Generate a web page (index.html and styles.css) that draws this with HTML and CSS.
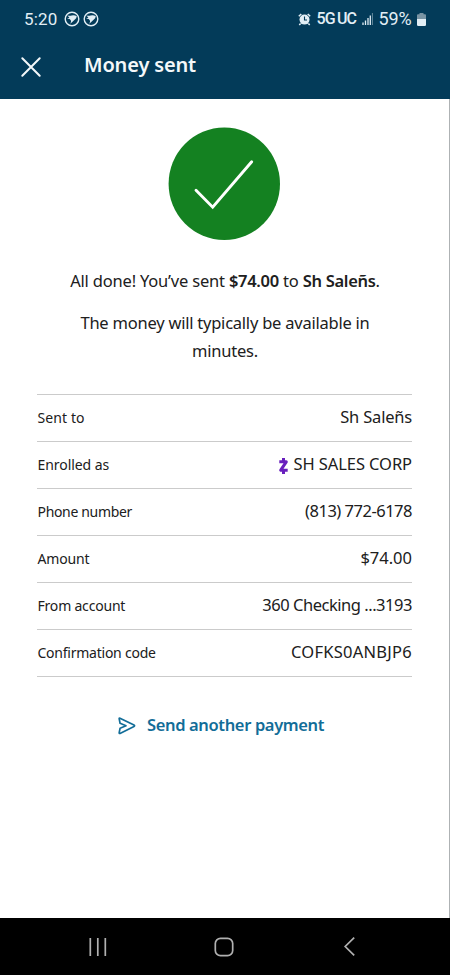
FILE: index.html
```
<!DOCTYPE html>
<html lang="en">
<head>
<meta charset="utf-8">
<title>Money sent</title>
<link rel="stylesheet" href="styles.css">
</head>
<body>
<header class="top">
  <div class="status">
    <span class="time">5:20</span>
    <svg class="globe" viewBox="0 0 16 16"><circle cx="8" cy="8" r="6.8" fill="none" stroke="currentColor" stroke-width="1.4"/><path d="M3.4 4.4Q6 5.1 7.6 4.4Q10.5 3.6 12.8 5.2Q12.6 7.4 10.6 8.8Q8.6 10.8 6.2 12.8Q7.6 10.4 6.8 9.2Q6.4 7.9 3 7.6Q5 6.9 5.4 6.3Q4 5.6 3.4 4.4Z" fill="currentColor"/></svg>
    <svg class="globe second" viewBox="0 0 16 16"><circle cx="8" cy="8" r="6.8" fill="none" stroke="currentColor" stroke-width="1.4"/><path d="M3.4 4.4Q6 5.1 7.6 4.4Q10.5 3.6 12.8 5.2Q12.6 7.4 10.6 8.8Q8.6 10.8 6.2 12.8Q7.6 10.4 6.8 9.2Q6.4 7.9 3 7.6Q5 6.9 5.4 6.3Q4 5.6 3.4 4.4Z" fill="currentColor"/></svg>
    <svg class="alarm" viewBox="0 0 13 13"><circle cx="6.5" cy="6.6" r="5" fill="currentColor"/><path d="M.8 3.3L3.3 1M9.7 1L12.2 3.3M2.6 10.5L1.3 12M10.4 10.5L11.7 12" stroke="currentColor" stroke-width="1.5"/><path d="M6.5 3.5V7H9" fill="none" stroke="#033b59" stroke-width="1.1"/></svg>
    <span class="network">5G<span class="uc">UC</span></span>
    <svg class="signal" viewBox="0 0 11 12"><path d="M1 9.5V12M3.5 7.5V12M6 5V12M8.3 2.5V12" stroke="currentColor" stroke-width="1.3"/><path d="M10.4 0V12" stroke="currentColor" stroke-width="1" opacity=".45"/></svg>
    <span class="percent">59%</span>
    <svg class="battery" viewBox="0 0 9 13"><path d="M2.5 0H6.5V1.3H8Q9 1.3 9 2.3V6H0V2.3Q0 1.3 1 1.3H2.5Z" fill="#7994a4"/><path d="M0 6H9V11.8Q9 13 7.8 13H1.2Q0 13 0 11.8Z" fill="currentColor"/></svg>
  </div>
  <div class="titlebar">
    <svg class="close" viewBox="0 0 20 20"><path d="M1.3 1.3L18.7 18.7M18.7 1.3L1.3 18.7" stroke="currentColor" stroke-width="2" stroke-linecap="round"/></svg>
    <h1>Money sent</h1>
  </div>
</header>
<main>
  <svg class="success" viewBox="0 0 112 113"><ellipse cx="56.3" cy="56.8" rx="55.7" ry="56.3" fill="#148121"/><path d="M28 63.3L44.7 80.2L83.7 34.8" fill="none" stroke="#fff" stroke-width="2.9" stroke-linecap="round" stroke-linejoin="miter"/></svg>
  <p class="done">All done! You’ve sent <b>$74.00</b> to <b>Sh Saleñs</b>.</p>
  <p class="note">The money will typically be available in<br>minutes.</p>
  <dl>
    <div class="row"><dt class="t1">Sent to</dt><dd class="d1">Sh Saleñs</dd></div>
    <div class="row"><dt class="t2">Enrolled as</dt><dd class="d2"><svg class="zelle" viewBox="0 0 11 18"><path d="M1.3 4.8H8.3L2.7 13.2H9.7M5.5 1V4M5.5 14V17" fill="none" stroke="#681fbd" stroke-width="3" stroke-linejoin="round"/></svg><span>SH SALES CORP</span></dd></div>
    <div class="row"><dt class="t3">Phone number</dt><dd class="d3">(813) 772-6178</dd></div>
    <div class="row"><dt class="t4">Amount</dt><dd class="d4">$74.00</dd></div>
    <div class="row"><dt class="t5">From account</dt><dd class="d5">360 Checking ...3193</dd></div>
    <div class="row"><dt class="t6">Confirmation code</dt><dd class="d6">COFKS0ANBJP6</dd></div>
  </dl>
  <div class="again">
    <svg class="send" viewBox="0 0 18 18"><path d="M1.2 1.8Q1 .8 2 1.2L16 8.1Q17.2 8.8 16 9.4L2 16.4Q1 16.7 1.2 15.7L2.1 11.2L8 8.8L2.1 6.3Z" fill="none" stroke="currentColor" stroke-width="1.7" stroke-linejoin="round"/></svg>
    <span>Send another payment</span>
  </div>
</main>
<nav>
  <svg class="recents" viewBox="0 0 18 18"><path d="M1.3 0V18M8.8 0V18M16.3 0V18" stroke="currentColor" stroke-width="1.7"/></svg>
  <svg class="home" viewBox="0 0 20 20"><rect x="1.3" y="1.3" width="17.4" height="17.4" rx="5.2" fill="none" stroke="currentColor" stroke-width="1.7"/></svg>
  <svg class="back" viewBox="0 0 11 19"><path d="M10.2 .6L1.2 9.5L10.2 18.4" fill="none" stroke="currentColor" stroke-width="1.7"/></svg>
</nav>
</body>
</html>
```
FILE: styles.css
```
* { box-sizing: border-box; }
body {
  margin: 0; width: 450px; height: 975px; overflow: hidden;
  display: flex; flex-direction: column; background: #fff;
  font-family: "Noto Sans", sans-serif; color: #202020;
}
svg { display: block; flex: none; overflow: visible; }
h1, p, dl, dd, dt { margin: 0; }
.top { height: 99px; background: #033b59; color: #f4f8fa; flex: none; }
.status {
  height: 37px; padding: 1px 24.5px 0 24px; display: flex; align-items: center;
  font: 16.5px/20px Roboto, sans-serif; color: #e2eef5; white-space: nowrap;
}
.time { width: 39.5px; font-size: 17px; letter-spacing: .2px; }
.globe { width: 16px; height: 16px; }
.second { margin-left: 3.5px; }
.alarm { width: 13px; height: 13px; margin-left: auto; }
.network { margin-left: 6px; width: 40px; font-size: 16px; font-weight: 500; letter-spacing: -.8px; }
.uc { margin-left: 2px; }
.signal { width: 11px; height: 12px; margin-left: 5px; }
.percent { margin-left: 6px; width: 36px; font-size: 18px; letter-spacing: -.1px; }
.battery { width: 9px; height: 13px; margin-left: 2px; }
.titlebar { display: flex; align-items: center; height: 56px; padding-left: 21px; }
.close { width: 20px; height: 20px; margin-top: 3px; }
h1 { margin-left: 43px; font-size: 20px; line-height: 28px; font-weight: 600; letter-spacing: -.15px; white-space: nowrap; }
main {
  flex: 1; padding: 28px 37px 0; border-right: 1px solid #aeb2b4;
  display: flex; flex-direction: column;
}
.success { width: 112px; height: 113px; margin-left: 131px; }
p { text-align: center; font-size: 16.5px; line-height: 28px; white-space: nowrap; letter-spacing: -.23px; padding-left: 1px; }
.done { margin-top: 27px; letter-spacing: -.19px; }
.done b { font-weight: 600; letter-spacing: -.3px; }
.note { margin-top: 14px; }
dl { margin-top: 29px; width: 375px; border-top: 1px solid #cbcbcb; }
.row {
  height: 47px; display: flex; align-items: center; justify-content: space-between;
  border-bottom: 1px solid #cbcbcb; white-space: nowrap;
}
dt { font-size: 14px; line-height: 20px; padding-left: .5px; }
.t1 { letter-spacing: .1px; }
.t2 { letter-spacing: -.07px; }
.t3 { letter-spacing: -.33px; }
.t4 { letter-spacing: -.15px; }
.t5 { letter-spacing: -.2px; }
.t6 { letter-spacing: -.24px; }
dd { font-size: 16.5px; line-height: 24px; display: flex; align-items: center; padding-bottom: 2px; }
.d1 { letter-spacing: -.2px; }
.d2 { letter-spacing: -.08px; }
.d3 { letter-spacing: -.5px; }
.d5 { letter-spacing: -.47px; }
.d6 { letter-spacing: .25px; }
.zelle { width: 11px; height: 18px; margin: 3px 4px 0 0; }
.again {
  display: flex; align-items: center; margin: 33px 0 0 81px; height: 28px;
  color: #126d98; font-size: 16.5px; letter-spacing: -.36px; font-weight: 600; white-space: nowrap;
}
.send { width: 18px; height: 18px; margin: 3px 11px 0 0; }
nav { height: 57px; background: #000; color: #b0b0b0; flex: none; display: flex; align-items: center; padding-left: 89px; }
.recents { width: 18px; height: 18px; }
.home { width: 20px; height: 20px; margin-left: 107px; }
.back { width: 11px; height: 19px; margin-left: 110px; }
```
